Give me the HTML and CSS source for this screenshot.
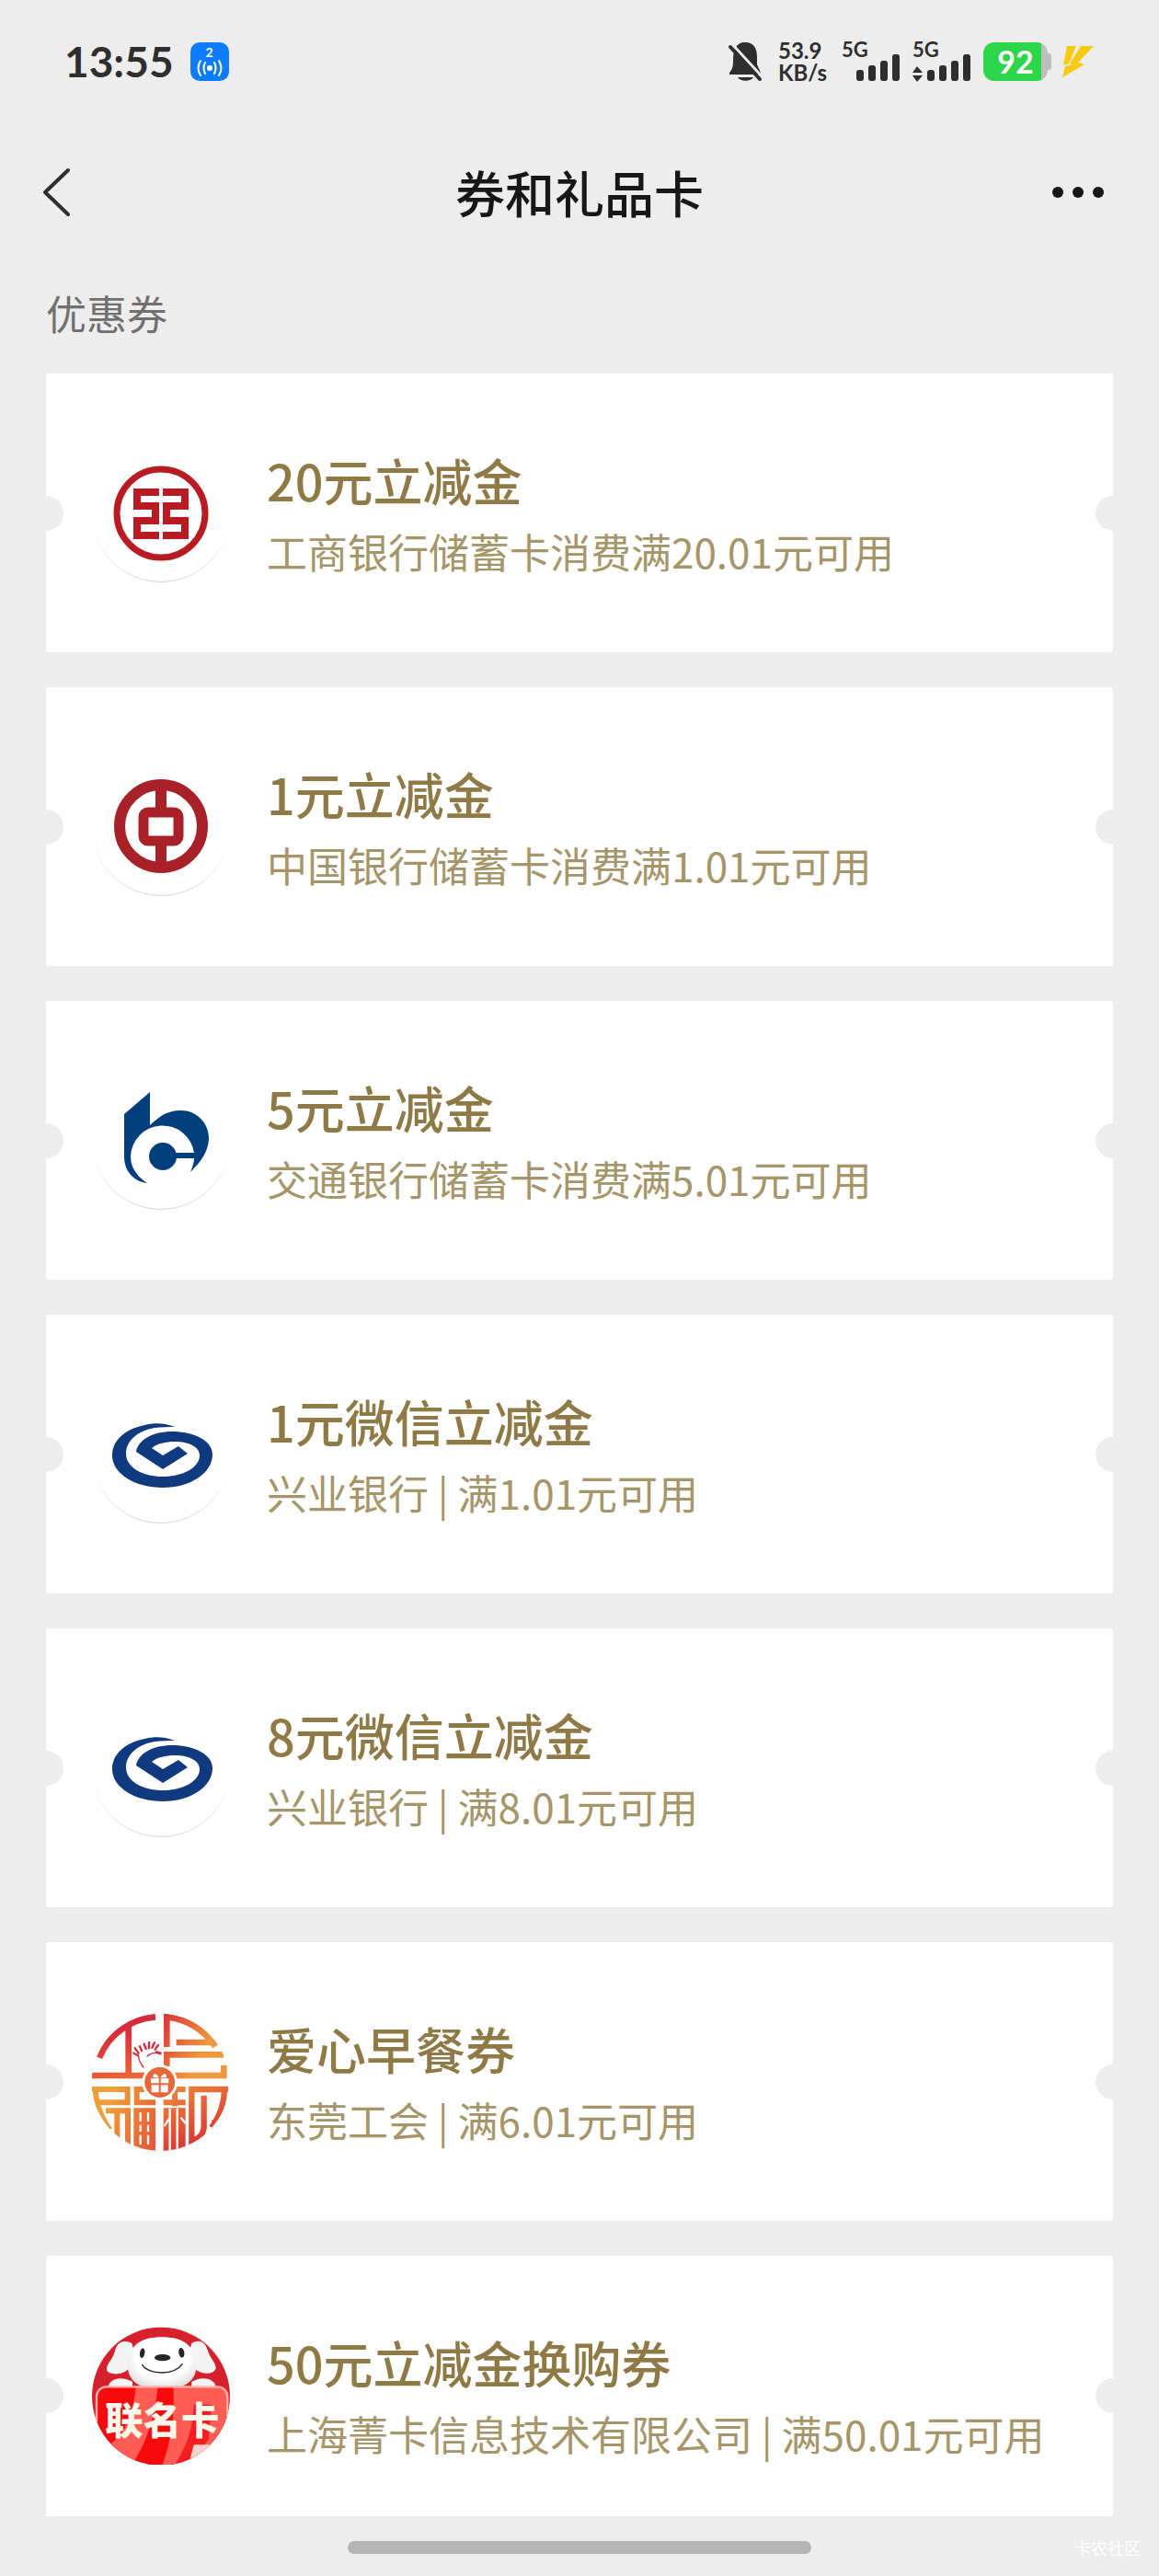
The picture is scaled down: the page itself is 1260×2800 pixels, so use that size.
FILE: index.html
```html
<!DOCTYPE html>
<html lang="zh-CN">
<head>
  <meta charset="UTF-8">
  <meta name="viewport" content="width=device-width, initial-scale=1.0">
  <title>券和礼品卡</title>
  <link rel="stylesheet" href="styles.css">
</head>
<body>
  <div class="page">
    <div class="status-bar">
      <div class="status-left">
        <span class="time">13:55</span>
        <div class="hotspot">
          <span class="hotspot-count">2</span>
          <svg width="30" height="20" viewBox="0 0 30 20" fill="none" stroke="#fff" stroke-width="2" stroke-linecap="round">
            <circle cx="15" cy="10" r="3" fill="#fff" stroke="none"/>
            <path d="M10 4Q7 10 10 16M5 2Q0 10 5 18M20 4Q23 10 20 16M25 2Q30 10 25 18"/>
          </svg>
        </div>
      </div>
      <div class="status-right">
        <svg class="mute-icon" width="38" height="44" viewBox="0 0 38 44">
          <path d="M6 22C6 9 9 1 19 1s13 7 13 16v8l4 9v2H2v-2c3-3 4-7 4-12zM11 39h17c-3 5-14 5-17 0z" fill="#2e2e2e"/>
          <path d="M5 3l34 37" stroke="#ececec" stroke-width="3"/>
          <path d="M3 6l32 35" stroke="#2e2e2e" stroke-width="4" stroke-linecap="round"/>
        </svg>
        <div class="speed"><span>53.9</span><span>KB/s</span></div>
        <div class="signal">
          <span class="signal-type">5G</span>
          <svg width="64" height="44" viewBox="0 0 64 44" fill="#2e2e2e">
            <rect x="16" y="31" width="8" height="12" rx="3"/>
            <rect x="29" y="26" width="8" height="17" rx="3"/>
            <rect x="42" y="21" width="8" height="22" rx="3"/>
            <rect x="55" y="14" width="8" height="29" rx="3"/>
          </svg>
        </div>
        <div class="signal">
          <span class="signal-type">5G</span>
          <svg width="64" height="44" viewBox="0 0 64 44" fill="#2e2e2e">
            <path d="M0 34l5-7 6 7zM0 37h11l-6 7z"/>
            <rect x="16" y="31" width="8" height="12" rx="3"/>
            <rect x="29" y="26" width="8" height="17" rx="3"/>
            <rect x="42" y="21" width="8" height="22" rx="3"/>
            <rect x="55" y="14" width="8" height="29" rx="3"/>
          </svg>
        </div>
        <div class="battery"><span>92</span></div>
        <svg class="bolt" width="36" height="36" viewBox="0 0 36 36" fill="#f8cb10">
          <path d="M6 1h10L8 20l-6 2zM21 1h14L18 19l7 2L1 35l3-12 8-2-3-1z"/>
        </svg>
      </div>
    </div>

    <header class="nav-bar">
      <button class="nav-button back" aria-label="返回">
        <svg width="32" height="56" viewBox="0 0 32 56" fill="none" stroke="#2e2e2e" stroke-width="4" stroke-linecap="round" stroke-linejoin="round">
          <path d="M28 4L3 28l25 24"/>
        </svg>
      </button>
      <h1 class="nav-title">券和礼品卡</h1>
      <button class="nav-button more" aria-label="更多">
        <svg width="56" height="12" viewBox="0 0 56 12" fill="#171717">
          <circle cx="6" cy="6" r="6"/><circle cx="28" cy="6" r="6"/><circle cx="50" cy="6" r="6"/>
        </svg>
      </button>
    </header>

    <main class="coupons">
      <h2 class="section-title">优惠券</h2>
      <ul class="coupon-list">
        <li class="coupon">
          <div class="logo logo-round">
            <svg viewBox="0 0 150 150" fill="none" stroke="#b81c22">
              <circle cx="75" cy="75" r="48" stroke-width="7"/>
              <path d="M73 52H49V67H69V83H49V99H73M77 52H101V67H81V83H101V99H77" stroke-width="8"/>
            </svg>
          </div>
          <div class="coupon-info">
            <h3 class="coupon-title">20元立减金</h3>
            <p class="coupon-desc">工商银行储蓄卡消费满20.01元可用</p>
          </div>
        </li>
        <li class="coupon">
          <div class="logo logo-round">
            <svg viewBox="0 0 150 150" fill="none" stroke="#a82128">
              <circle cx="75" cy="74" r="45" stroke-width="12"/>
              <rect x="56" y="59" width="38" height="31" rx="5" stroke-width="11"/>
              <path d="M75 28v28M75 93v28" stroke-width="12"/>
            </svg>
          </div>
          <div class="coupon-info">
            <h3 class="coupon-title">1元立减金</h3>
            <p class="coupon-desc">中国银行储蓄卡消费满1.01元可用</p>
          </div>
        </li>
        <li class="coupon">
          <div class="logo logo-round">
            <svg viewBox="0 0 150 150" fill="#003e7e">
              <path d="M63 22L35 46v46c0 16 10 27 25 29-11-7-18-17-18-29A34.7 34.7 0 0 1 111 88H91v6h20c0 5-2 10-4 15 9-9 20-21 20-37 0-17-14-30-30-30-17 0-25 8-34 16z"/>
              <circle cx="77" cy="92" r="15"/>
            </svg>
          </div>
          <div class="coupon-info">
            <h3 class="coupon-title">5元立减金</h3>
            <p class="coupon-desc">交通银行储蓄卡消费满5.01元可用</p>
          </div>
        </li>
        <li class="coupon">
          <div class="logo logo-round">
            <svg viewBox="0 2 150 150" fill="#0f3a80">
              <path d="M90 47C80 43 72 43 66 43.500C42 46 22 58 22 78C22 98 47 113 77 113S131 97 131 77C131 62 111 52 87 52C66 52 50 61 48 74L77 93L104 76L94 68L77 78L65 70C71 65 80 63 90 63C106 63 117 69 117 78C117 91 99 101 77 101S37 91 37 76C37 62 50 51 68 48C75 47 83 47 90 47Z"/>
            </svg>
          </div>
          <div class="coupon-info">
            <h3 class="coupon-title">1元微信立减金</h3>
            <p class="coupon-desc">兴业银行 | 满1.01元可用</p>
          </div>
        </li>
        <li class="coupon">
          <div class="logo logo-round">
            <svg viewBox="0 2 150 150" fill="#0f3a80">
              <path d="M90 47C80 43 72 43 66 43.500C42 46 22 58 22 78C22 98 47 113 77 113S131 97 131 77C131 62 111 52 87 52C66 52 50 61 48 74L77 93L104 76L94 68L77 78L65 70C71 65 80 63 90 63C106 63 117 69 117 78C117 91 99 101 77 101S37 91 37 76C37 62 50 51 68 48C75 47 83 47 90 47Z"/>
            </svg>
          </div>
          <div class="coupon-info">
            <h3 class="coupon-title">8元微信立减金</h3>
            <p class="coupon-desc">兴业银行 | 满8.01元可用</p>
          </div>
        </li>
        <li class="coupon">
          <div class="logo">
            <svg viewBox="60 51 450 450" fill="none">
              <defs>
                <clipPath id="unionClip"><circle cx="283" cy="277" r="224"/></clipPath>
                <linearGradient id="tl" gradientUnits="userSpaceOnUse" x1="130" y1="110" x2="180" y2="264">
                  <stop offset="0" stop-color="#d9283a"/><stop offset="1" stop-color="#ee6535"/>
                </linearGradient>
                <linearGradient id="tr" gradientUnits="userSpaceOnUse" x1="293" y1="80" x2="430" y2="160">
                  <stop offset="0" stop-color="#dc3a38"/><stop offset="1" stop-color="#f0963c"/>
                </linearGradient>
                <linearGradient id="bl" gradientUnits="userSpaceOnUse" x1="90" y1="390" x2="265" y2="470">
                  <stop offset="0" stop-color="#eea038"/><stop offset="1" stop-color="#e65a38"/>
                </linearGradient>
                <linearGradient id="br" gradientUnits="userSpaceOnUse" x1="310" y1="291" x2="400" y2="490">
                  <stop offset="0" stop-color="#ee8a3c"/><stop offset="1" stop-color="#da3232"/>
                </linearGradient>
              </defs>
              <g clip-path="url(#unionClip)">
                <g stroke="url(#tl)" stroke-width="20">
                  <path d="M84 197A214 214 0 0 1 267 64M179 85V255"/>
                  <path d="M60 255H240V256"/>
                </g>
                <g stroke="url(#tr)" stroke-width="20">
                  <path d="M304 50V162M304 64Q405 76 462 160M335 147H470M304 225V187H490M330 255H490V222"/>
                </g>
                <g stroke="url(#bl)" stroke-width="18">
                  <path d="M60 300H176V345M71 300Q74 370 118 432M80 343H185M105 370H186M142 370V500M177 370V500"/>
                  <path d="M206 291V352M197 343H267M215 300H240"/>
                  <path d="M196 432H267" stroke-width="142"/>
                </g>
                <g stroke="url(#br)">
                  <path d="M330 291V355M310 300H365M293 343H365" stroke-width="18"/>
                  <path d="M293 432H365" stroke-width="142"/>
                  <path d="M385 490V300H505M425 320V425Q420 462 385 466M492 300Q490 370 450 425M460 400V425" stroke-width="19"/>
                </g>
                <path d="M218 375V405M243 375V405M218 416V438M243 416V438M218 449V480M243 449V480M314 362V392L296 420M314 392V500M338 362V500M350 392L366 412" stroke="#fff" stroke-width="7"/>
              </g>
              <g stroke="#d52b3c" stroke-linecap="round">
                <path d="M228 228Q210 205 212 190M240 192Q262 174 284 186" stroke-width="4"/>
                <path d="M210 190L196 182M212 182L200 166M222 174L216 160M236 168L230 152M246 166L246 147M256 164L264 148M266 170L276 156M270 178L284 182" stroke-width="7"/>
              </g>
              <circle cx="281" cy="277" r="58" fill="#fff"/>
              <circle cx="281" cy="277" r="49" fill="url(#br)"/>
              <circle cx="281" cy="277" r="49" fill="#e4583a" opacity=".7"/>
              <path d="M252 264h26v16h-26zM284 264h26v16h-26zM254 286h24v24h-24zM284 286h24v24h-24zM278 262c-8-18-22-14-18 0zM284 262c8-18 22-14 18 0z" fill="#fff"/>
            </svg>
          </div>
          <div class="coupon-info">
            <h3 class="coupon-title">爱心早餐券</h3>
            <p class="coupon-desc">东莞工会 | 满6.01元可用</p>
          </div>
        </li>
        <li class="coupon">
          <div class="logo">
            <svg viewBox="60 51 450 450">
              <defs>
                <clipPath id="jointClip"><circle cx="285" cy="278" r="225"/></clipPath>
                <clipPath id="cardClip"><rect x="75" y="247" width="427" height="270" rx="32"/></clipPath>
                <radialGradient id="dogFace" cx=".5" cy=".4" r=".65">
                  <stop offset=".6" stop-color="#fff"/><stop offset="1" stop-color="#d9d9dc"/>
                </radialGradient>
              </defs>
              <g clip-path="url(#jointClip)">
                <rect x="60" y="51" width="450" height="450" fill="#d6202c"/>
                <path d="M190 105C160 90 140 105 135 130C130 155 105 175 108 192C115 210 160 210 178 190L200 140z" fill="#f4f4f5"/>
                <path d="M385 105C410 90 430 100 438 130C445 155 466 170 464 188C455 208 420 208 400 192L375 140z" fill="#f4f4f5"/>
                <path d="M112 250c5-30 40-40 80-20v30zM465 250c-5-30-40-40-80-20v30z" fill="#f4f4f5"/>
                <path d="M288 85C340 85 390 100 400 165C405 215 380 255 288 255S172 215 177 165C185 100 235 85 288 85z" fill="url(#dogFace)"/>
                <ellipse cx="224" cy="137" rx="8" ry="16" fill="#292426" transform="rotate(10 224 137)"/>
                <ellipse cx="352" cy="136" rx="9" ry="16" fill="#292426" transform="rotate(-10 352 136)"/>
                <ellipse cx="290" cy="152" rx="26" ry="11" fill="#292426"/>
                <path d="M224 175C245 210 330 210 354 173" fill="none" stroke="#292426" stroke-width="4" stroke-linecap="round"/>
                <g clip-path="url(#cardClip)">
                  <rect x="75" y="247" width="427" height="270" fill="#f80a0c"/>
                  <path d="M203 247H275C265 340 240 430 190 501H60V455C150 450 195 350 203 247zM325 247H510V501H290C320 420 330 330 325 247z" fill="#ff5d56"/>
                  <path d="M392 305H450L440 420L370 501H330C370 440 390 380 392 305z" fill="#f41d20"/>
                  <path d="M392 436H502V501H375z" fill="#ffd3cf"/>
                </g>
                <rect x="75" y="247" width="427" height="290" rx="32" fill="none" stroke="#ffb3ab" stroke-width="7"/>
                <text class="joint-text" x="289" y="401" text-anchor="middle">联名卡</text>
              </g>
            </svg>
          </div>
          <div class="coupon-info">
            <h3 class="coupon-title">50元立减金换购券</h3>
            <p class="coupon-desc">上海菁卡信息技术有限公司 | 满50.01元可用</p>
          </div>
        </li>
      </ul>
    </main>

    <footer class="bottom-bar">
      <div class="home-indicator"></div>
      <span class="watermark">卡农社区</span>
    </footer>
  </div>
</body>
</html>
```
FILE: styles.css
```css
* {
  box-sizing: border-box;
  margin: 0;
  padding: 0;
}

body {
  font-family: "Noto Sans CJK SC", sans-serif;
  background-color: #ededed;
  color: #171717;
}

svg {
  display: block;
}

.page {
  display: flex;
  flex-direction: column;
  height: 100vh;
}

/* status bar */
.status-bar {
  display: flex;
  justify-content: space-between;
  align-items: center;
  flex-shrink: 0;
  height: 134px;
  padding: 0 70px;
  font-family: Lato, sans-serif;
  font-weight: bold;
  color: #2e2e2e;
}

.status-left,
.status-right {
  display: flex;
  align-items: center;
}

.status-left {
  gap: 18px;
}

.status-right {
  gap: 13px;
}

.time {
  font-size: 46px;
  line-height: 60px;
}

.hotspot {
  display: flex;
  flex-direction: column;
  align-items: center;
  width: 42px;
  height: 42px;
  padding-top: 4px;
  border-radius: 10px;
  background-color: #0f7bff;
  color: #fff;
}

.hotspot-count {
  font-size: 14px;
  line-height: 14px;
}

.speed {
  display: flex;
  flex-direction: column;
  width: 56px;
  margin-left: 4px;
  font-size: 24px;
  line-height: 24px;
}

.signal {
  position: relative;
}

.signal-type {
  position: absolute;
  top: 0;
  left: 0;
  font-size: 22px;
  line-height: 18px;
}

.battery {
  position: relative;
  display: flex;
  align-items: center;
  justify-content: center;
  width: 70px;
  height: 42px;
  margin-right: 2px;
  border-radius: 12px;
  background: linear-gradient(to right, #2bd648 90%, #bdbdbd 90%);
  font-size: 34px;
  line-height: 40px;
  color: #fff;
}

.battery::after {
  content: '';
  position: absolute;
  top: 12px;
  right: -4px;
  width: 6px;
  height: 18px;
  border-radius: 3px;
  background-color: #bdbdbd;
}

/* navigation */
.nav-bar {
  display: grid;
  grid-template-columns: 1fr auto 1fr;
  align-items: center;
  flex-shrink: 0;
  height: 150px;
  padding: 0 46px;
}

.nav-button {
  border: none;
  background: none;
  cursor: pointer;
}

.back {
  justify-self: start;
}

.more {
  justify-self: end;
  padding: 14px;
}

.nav-title {
  font-size: 54px;
  font-weight: 500;
  line-height: 72px;
}

/* coupon list */
.coupons {
  flex: 1;
  min-height: 0;
  padding: 26px 50px 0;
  overflow: hidden;
}

.section-title {
  padding-bottom: 36px;
  font-size: 44px;
  font-weight: 400;
  line-height: 60px;
  color: #707070;
}

.coupon-list {
  display: flex;
  flex-direction: column;
  gap: 38px;
  list-style: none;
}

.coupon {
  position: relative;
  display: flex;
  align-items: center;
  gap: 40px;
  height: 303px;
  padding: 0 50px;
  border-radius: 3px;
  background-color: #fff;
  overflow: hidden;
}

.coupon::before,
.coupon::after {
  content: '';
  position: absolute;
  top: 133px;
  width: 38px;
  height: 38px;
  border-radius: 50%;
  background-color: #ededed;
}

.coupon::before {
  left: -19px;
}

.coupon::after {
  right: -19px;
}

.logo {
  flex-shrink: 0;
  width: 150px;
  height: 150px;
}

.logo-round {
  border-radius: 50%;
  box-shadow: inset 0 -2px 1px -1px #d4d4d4;
}

.joint-text {
  font-size: 124px;
  font-weight: 900;
  fill: #fff9ec;
}

.coupon-title {
  font-size: 54px;
  font-weight: 500;
  line-height: 74px;
  color: #8f7a46;
}

.coupon-desc {
  padding-top: 8px;
  font-size: 44px;
  line-height: 64px;
  color: #a59568;
}

/* bottom */
.bottom-bar {
  display: grid;
  grid-template-columns: 1fr 40% 1fr;
  align-items: center;
  flex-shrink: 0;
  height: 65px;
  padding: 2px 0 0;
}

.home-indicator {
  grid-column: 2;
  height: 14px;
  border-radius: 7px;
  background-color: #b4b4b4;
}

.watermark {
  justify-self: end;
  padding-right: 20px;
  font-size: 18px;
  line-height: 24px;
  color: #fff;
}
```
